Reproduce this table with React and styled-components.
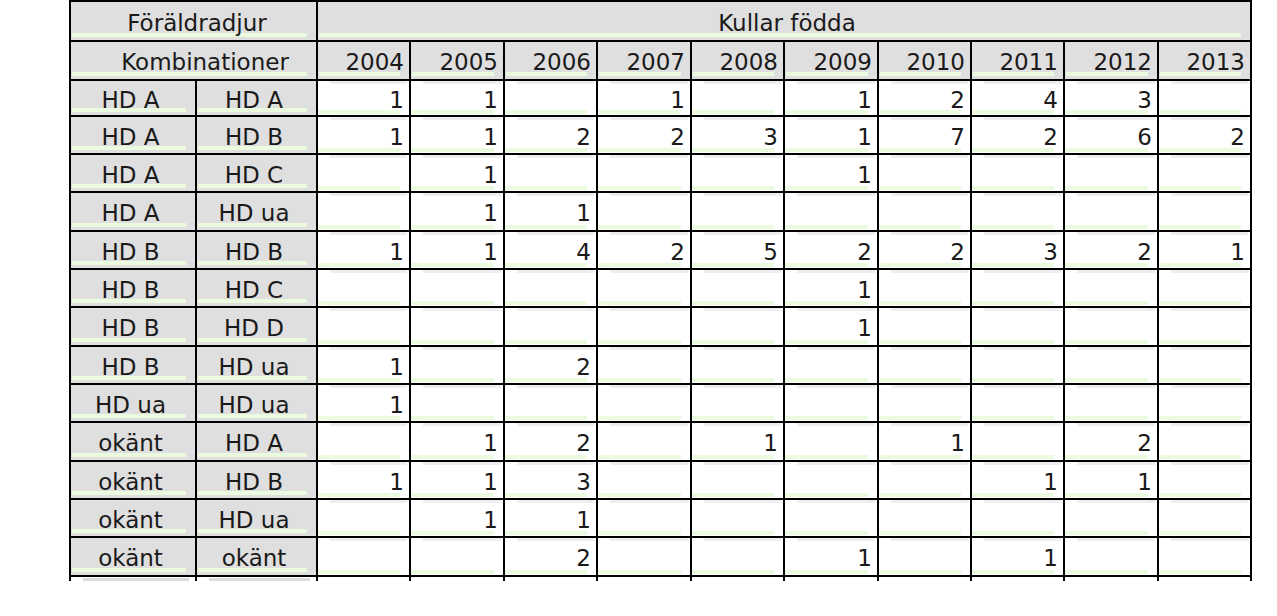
import styled, { createGlobalStyle } from "styled-components";

const GlobalStyle = createGlobalStyle`
  body {
    margin: 0;
    background: #fff;
    font-family: "DejaVu Sans", Verdana, sans-serif;
    color: #1a1a1a;
  }
`;

const years = [2004, 2005, 2006, 2007, 2008, 2009, 2010, 2011, 2012, 2013];
const yearWidths = [93, 94, 93, 94, 93, 94, 93, 93, 94, 93];

// föräldrakombination + antal kullar per år (tom = inga)
const rows = [
  ["HD A", "HD A", [1, 1, "", 1, "", 1, 2, 4, 3, ""]],
  ["HD A", "HD B", [1, 1, 2, 2, 3, 1, 7, 2, 6, 2]],
  ["HD A", "HD C", ["", 1, "", "", "", 1, "", "", "", ""]],
  ["HD A", "HD ua", ["", 1, 1, "", "", "", "", "", "", ""]],
  ["HD B", "HD B", [1, 1, 4, 2, 5, 2, 2, 3, 2, 1]],
  ["HD B", "HD C", ["", "", "", "", "", 1, "", "", "", ""]],
  ["HD B", "HD D", ["", "", "", "", "", 1, "", "", "", ""]],
  ["HD B", "HD ua", [1, "", 2, "", "", "", "", "", "", ""]],
  ["HD ua", "HD ua", [1, "", "", "", "", "", "", "", "", ""]],
  ["okänt", "HD A", ["", 1, 2, "", 1, "", 1, "", 2, ""]],
  ["okänt", "HD B", [1, 1, 3, "", "", "", "", 1, 1, ""]],
  ["okänt", "HD ua", ["", 1, 1, "", "", "", "", "", "", ""]],
  ["okänt", "okänt", ["", "", 2, "", "", 1, "", 1, "", ""]],
];

const Page = styled.div`
  padding-left: 69px;
  height: 616px;
  overflow: hidden;
`;

const Grid = styled.div`
  display: grid;
  width: fit-content;
  grid-template-columns: 126px 121px ${yearWidths.map((w) => `${w}px`).join(" ")};
  grid-template-rows:
    40px 39px 36px 38px 38px 39px 38px 38px 39px 38px 38px 39px 38px 38px
    39px 4px;
  border-top: 2px solid #000;
  border-left: 2px solid #000;
`;

const green = "#ebfbdf";

const Cell = styled.div`
  box-sizing: border-box;
  grid-column: span ${(p) => p.$span || 1};
  display: flex;
  align-items: center;
  justify-content: ${(p) => (p.$right ? "flex-end" : "center")};
  padding: 3px 5px 0 ${(p) => p.$indent || 0}px;
  border-right: 2px solid #000;
  border-bottom: 2px solid #000;
  font-size: 23px;
  white-space: pre;
  background: ${(p) =>
    p.$head
      ? `linear-gradient(${green}, ${green}) left 1px bottom 3px / calc(100% - 10px) 4px no-repeat, #dfdfdf`
      : `linear-gradient(${green}, ${green}) left 0 bottom 1px / calc(100% - 9px) 4px no-repeat,
         linear-gradient(#eeeeee, #eeeeee) left 12px top 0 / calc(100% - 14px) 3px no-repeat, #fff`};
`;

const Stub = styled.div`
  border-right: 2px solid #000;
  background: ${(p) =>
    p.$head
      ? "linear-gradient(#dcdcdc, #dcdcdc) left 12px top 1px / calc(100% - 18px) 4px no-repeat"
      : "none"};
`;

export default function App() {
  return (
    <Page>
      <GlobalStyle />
      <Grid>
        <Cell $head $span={2} $indent={12}>
          Föräldradjur
        </Cell>
        <Cell $head $span={10} $indent={11}>
          Kullar födda
        </Cell>
        <Cell $head $span={2} $indent={28}>
          Kombinationer
        </Cell>
        {years.map((y) => (
          <Cell key={y} $head $right>
            {y}
          </Cell>
        ))}
        {rows.map(([a, b, counts], i) => [
          <Cell key={`a${i}`} $head>
            {a}
          </Cell>,
          <Cell key={`b${i}`} $head>
            {b}
          </Cell>,
          ...counts.map((n, j) => (
            <Cell key={`c${i}-${j}`} $right>
              {n}
            </Cell>
          )),
        ])}
        {Array.from({ length: 12 }, (_, i) => (
          <Stub key={`s${i}`} $head={i < 2} />
        ))}
      </Grid>
    </Page>
  );
}
